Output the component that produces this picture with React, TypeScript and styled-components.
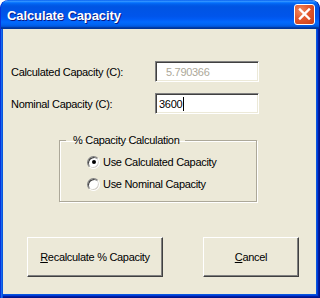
import React from "react";
import styled, { createGlobalStyle } from "styled-components";

const Global = createGlobalStyle`
  html, body { margin: 0; padding: 0; background: #ffffff; }
  body {
    font-family: "Liberation Sans", Arial, sans-serif;
    font-size: 11px;
    letter-spacing: -0.3px;
    color: #000;
  }
  * { box-sizing: border-box; }
`;

const Window = styled.div`
  width: 320px;
  height: 298px;
  display: flex;
  flex-direction: column;
  overflow: hidden;
  border-radius: 8px 8px 0 0;
`;

const TitleBar = styled.div`
  height: 29px;
  flex: none;
  display: flex;
  align-items: center;
  justify-content: space-between;
  padding: 0 5px 0 7px;
  border-radius: 8px 8px 0 0;
  background: linear-gradient(
    180deg,
    #0058ee 0%,
    #3593ff 4%,
    #288eff 6%,
    #127dff 8%,
    #036ffc 10%,
    #0262ee 14%,
    #0057e5 20%,
    #0054e3 24%,
    #0055eb 56%,
    #005bf5 66%,
    #026afe 76%,
    #0062ef 86%,
    #0052d6 92%,
    #0040ab 94%,
    #003092 100%
  );
  box-shadow: inset 1px 0 #0831d9, inset -1px 0 #001ea0;
`;

const Title = styled.span`
  font-family: "Liberation Sans", Arial, sans-serif;
  font-weight: bold;
  font-size: 13px;
  letter-spacing: -0.1px;
  color: #ffffff;
  text-shadow: 1px 1px #0a1883;
  margin-top: 1px;
`;

const CloseButton = styled.div`
  width: 21px;
  height: 21px;
  border: 1px solid #ffffff;
  border-radius: 3px;
  background: radial-gradient(circle at 30% 30%, #f08a60 0%, #e2582e 45%, #c73d17 100%);
  display: flex;
  align-items: center;
  justify-content: center;
`;

const Frame = styled.div`
  flex: 1;
  display: flex;
  flex-direction: column;
  background: #ece9d8;
  padding: 32px 4px 4px 3px;
  box-shadow: inset 1px 0 #0831d9, inset 2px 0 #166aee, inset 3px 0 #0855dd,
    inset -1px -1px #00138c, inset -2px -2px #001ea0, inset -3px -3px #003bda,
    inset -4px -4px #0855dd;
`;

const FieldRows = styled.div`
  display: flex;
  flex-direction: column;
  gap: 11px;
`;

const FieldRow = styled.div`
  display: flex;
  align-items: center;
  height: 21px;
  padding-left: 8px;
`;

const FieldLabel = styled.span`
  width: 144px;
  flex: none;
`;

const TextBox = styled.div<{ $disabled?: boolean }>`
  width: 104px;
  height: 21px;
  display: flex;
  align-items: center;
  background: #ffffff;
  border: 1px solid;
  border-color: #808080 #ffffff #ffffff #808080;
  box-shadow: inset 1px 1px #404040, inset -1px -1px #ece9d8;
  padding-left: ${(p) => (p.$disabled ? "10px" : "3px")};
  color: ${(p) => (p.$disabled ? "#aca899" : "#000000")};
`;

const Caret = styled.span`
  display: inline-block;
  width: 1px;
  height: 14px;
  background: #000;
  margin-left: 1px;
`;

const GroupBox = styled.fieldset`
  margin: 20px 0 0 56px;
  width: 198px;
  padding: 7px 0 9px 0;
  border: 1px solid #aca899;
  box-shadow: inset 1px 1px #ffffff, 1px 1px #ffffff;
  min-width: 0;
`;

const GroupLegend = styled.legend`
  margin-left: 6px;
  padding: 0 5px 0 7px;
  line-height: 13px;
  font-size: 11px;
`;

const RadioList = styled.div`
  display: flex;
  flex-direction: column;
  gap: 6px;
  padding-left: 27px;
`;

const RadioRow = styled.label`
  display: flex;
  align-items: center;
  height: 16px;
  gap: 3px;
`;

const RadioCircle = styled.span<{ $checked?: boolean }>`
  width: 13px;
  height: 13px;
  border-radius: 50%;
  background: #ffffff;
  border: 1px solid;
  border-color: #808080 #ffffff #ffffff #808080;
  box-shadow: inset 1px 1px #404040, inset -1px -1px #d4d0c8;
  display: flex;
  align-items: center;
  justify-content: center;
  flex: none;

  &::after {
    content: "";
    width: 4px;
    height: 4px;
    border-radius: 50%;
    background: ${(p) => (p.$checked ? "#000000" : "transparent")};
  }
`;

const ButtonRow = styled.div`
  display: flex;
  gap: 40px;
  margin-top: 35px;
  padding-left: 24px;
`;

const PushButton = styled.div<{ $width: number }>`
  width: ${(p) => p.$width}px;
  height: 40px;
  display: flex;
  align-items: center;
  justify-content: center;
  background: #ece9d8;
  border: 1px solid;
  border-color: #ffffff #404040 #404040 #ffffff;
  box-shadow: inset -1px -1px #808080;
  font-size: 11px;
`;

export default function App() {
  return (
    <>
      <Global />
      <Window>
        <TitleBar>
          <Title>Calculate Capacity</Title>
          <CloseButton>
            <svg width="19" height="19" viewBox="0 0 19 19">
              <path d="M5 4.5 L14 13.5 M14 4.5 L5 13.5" stroke="#ffffff" strokeWidth="2.4" strokeLinecap="square" />
            </svg>
          </CloseButton>
        </TitleBar>
        <Frame>
          <FieldRows>
            <FieldRow>
              <FieldLabel>Calculated Capacity (C):</FieldLabel>
              <TextBox $disabled>5.790366</TextBox>
            </FieldRow>
            <FieldRow>
              <FieldLabel>Nominal Capacity (C):</FieldLabel>
              <TextBox>
                3600
                <Caret />
              </TextBox>
            </FieldRow>
          </FieldRows>
          <GroupBox>
            <GroupLegend>% Capacity Calculation</GroupLegend>
            <RadioList>
              <RadioRow>
                <RadioCircle $checked />
                Use Calculated Capacity
              </RadioRow>
              <RadioRow>
                <RadioCircle />
                Use Nominal Capacity
              </RadioRow>
            </RadioList>
          </GroupBox>
          <ButtonRow>
            <PushButton $width={136}>
              <span>
                <u>R</u>ecalculate % Capacity
              </span>
            </PushButton>
            <PushButton $width={96}>
              <span>
                <u>C</u>ancel
              </span>
            </PushButton>
          </ButtonRow>
        </Frame>
      </Window>
    </>
  );
}
